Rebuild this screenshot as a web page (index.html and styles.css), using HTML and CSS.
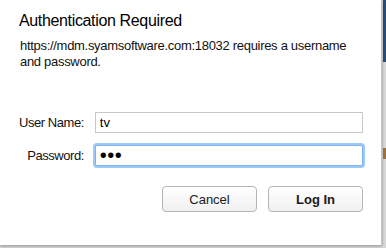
FILE: index.html
```
<!DOCTYPE html>
<html lang="en">
<head>
    <meta charset="UTF-8">
    <meta name="viewport" content="width=device-width, initial-scale=1.0">
    <title>Authentication Required</title>
    <link rel="stylesheet" href="styles.css">
</head>
<body>
    <div class="screen">
        <div class="dialog">
            <div class="title">Authentication Required</div>
            <div class="message">https://mdm.syamsoftware.com:18032 requires a username and password.</div>

            <form class="login-form">
                <label class="field-label" for="username">User Name:</label>
                <input class="input-box" id="username" type="text" value="tv">
                <label class="field-label" for="password">Password:</label>
                <input class="input-box focused" id="password" type="password" value="abc">

                <div class="actions">
                    <button type="button" class="button">Cancel</button>
                    <button type="submit" class="button primary">Log In</button>
                </div>
            </form>
        </div>
        <div class="backdrop">
            <div class="backdrop-top"></div>
            <div class="backdrop-mark"></div>
        </div>
    </div>
</body>
</html>
```
FILE: styles.css
```
body {
    margin: 0;
    background-color: #d9d9d9;
    font-family: 'Liberation Sans', Arial, sans-serif;
    color: #000;
}
.screen {
    display: flex;
    width: 386px;
    height: 248px;
    overflow: hidden;
}
.dialog {
    flex: none;
    width: 382px;
    height: 245px;
    box-sizing: border-box;
    padding: 11px 18px 0 19px;
    background-color: #fff;
    border-right: 1px solid #c4c4c4;
    box-shadow: 0 1px 3px rgba(0, 0, 0, 0.35);
}
.title {
    font-size: 16px;
    line-height: 20px;
    letter-spacing: -0.35px;
}
.message {
    margin-top: 7px;
    padding-left: 1px;
    font-size: 13px;
    line-height: 16px;
    letter-spacing: -0.3px;
    color: #111;
}
.login-form {
    display: grid;
    grid-template-columns: max-content minmax(0, 1fr);
    column-gap: 11px;
    row-gap: 12px;
    align-items: center;
    margin-top: 42px;
}
.field-label {
    text-align: right;
    white-space: nowrap;
    font-size: 13px;
    letter-spacing: -0.45px;
    color: #111;
}
.input-box {
    width: 100%;
    min-width: 0;
    height: 21px;
    box-sizing: border-box;
    margin: 0;
    padding: 0 4px;
    border: 1px solid #c8c8c8;
    border-radius: 0;
    font-family: 'Liberation Sans', Arial, sans-serif;
    font-size: 13px;
    color: #000;
    outline: none;
}
.input-box.focused {
    border-color: #7fb2ee;
    border-radius: 2px;
    box-shadow: 0 0 0 2px #9dc9f8;
    font-size: 20px;
    letter-spacing: 0.5px;
}
.actions {
    grid-column: 1 / 3;
    display: flex;
    justify-content: flex-end;
    gap: 11px;
    margin-top: 8px;
}
.button {
    width: 95px;
    height: 26px;
    background: linear-gradient(#ffffff, #f0f0f0);
    border: 1px solid #b5b5b5;
    border-radius: 4px;
    font-family: 'Liberation Sans', Arial, sans-serif;
    font-size: 13px;
    color: #1a1a1a;
    cursor: pointer;
}
.button.primary {
    font-weight: bold;
}
.backdrop {
    flex: 1;
    display: flex;
    flex-direction: column;
    margin-left: 1px;
}
.backdrop-top {
    height: 62px;
    background-color: #284c78;
}
.backdrop-mark {
    height: 11px;
    margin-top: 86px;
    background-color: #a0703a;
}
```
